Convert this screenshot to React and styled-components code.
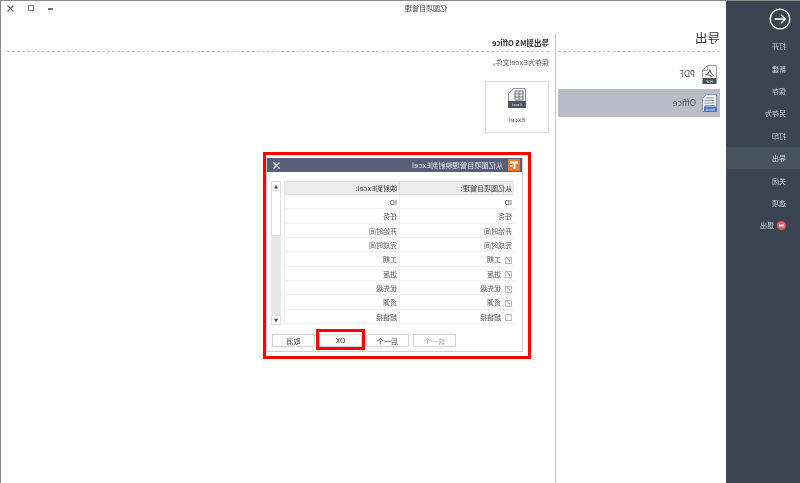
import React from "react";
import styled, { createGlobalStyle } from "styled-components";

// the whole screen in the reference is a mirror image, so it is laid out
// normally here and flipped once on Root
const GlobalStyle = createGlobalStyle`
  html, body {
    margin: 0;
    padding: 0;
    background: #fff;
    overflow: hidden;
  }
  * {
    box-sizing: border-box;
  }
`;

const fontStack = `"DejaVu Sans", "Noto Sans CJK SC", sans-serif`;

const menuItems = ["打开", "新建", "保存", "另存为", "打印", "导出", "关闭", "选项"];
const fields = [
  { name: "ID" },
  { name: "任务" },
  { name: "开始时间" },
  { name: "完成时间" },
  { name: "工期", check: true },
  { name: "进度", check: true },
  { name: "优先级", check: true },
  { name: "资源", check: true },
  { name: "超链接", check: false },
];

const BackIcon = () => (
  <svg width="22" height="22" viewBox="0 0 22 22" fill="none" stroke="#fff">
    <circle cx="11" cy="11" r="9.8" strokeWidth="1.3" />
    <path d="M16.5 11H6M10 6.8 5.8 11l4.2 4.2" strokeWidth="1.5" />
  </svg>
);

const ExitIcon = () => (
  <svg width="9" height="9" viewBox="0 0 9 9">
    <circle cx="4.5" cy="4.5" r="4.5" fill="#ee5a63" />
    <rect x="1.8" y="3.6" width="5.4" height="1.8" fill="#fff" />
  </svg>
);

const PdfIcon = () => (
  <svg width="16" height="19" viewBox="0 0 16 19" fill="none">
    <path d="M.5.5h9l5 5v13H.5z" fill="#fff" stroke="#9a9ca3" />
    <path d="M9.500.5v5h5" stroke="#9a9ca3" />
    <path d="M3 10.500c2-.6 3.500-3 4-6 .5 3 2 4.500 4.500 5-2.500 0-5 .6-6.500 2.500" stroke="#555a66" strokeWidth="1.1" />
    <rect x="1" y="13" width="13" height="6" fill="#4a4f5e" />
    <IconLabel x="7.500" y="17.800">PDF</IconLabel>
  </svg>
);

const WordIcon = () => (
  <svg width="15" height="18" viewBox="0 0 15 18" fill="none">
    <path d="M.5.5h10l4 4v13H.5z" fill="#eef0f4" stroke="#8f94a3" />
    <path d="M2.500 4h8M2.500 6.500h10M2.500 9h10M2.500 11.500h10" stroke="#8f94a3" />
    <rect x="0" y="12.500" width="13" height="5.500" fill="#4a78b8" />
    <IconLabel x="6.500" y="17">Word</IconLabel>
  </svg>
);

const ExcelIcon = () => (
  <svg width="18" height="20" viewBox="0 0 18 20" fill="none">
    <path d="M.5.5h12l5 5v14H.5z" fill="#f4f4f6" stroke="#8f93a0" />
    <path d="M3 3h8v9H3zM3 6h8M3 9h8M7 3v9" stroke="#6d7180" />
    <rect x="0" y="13" width="18" height="7" fill="#4c5060" />
    <IconLabel x="9" y="18">Excel</IconLabel>
  </svg>
);

const LogoIcon = () => (
  <svg width="12" height="12" viewBox="0 0 12 12">
    <rect width="12" height="12" fill="#ec7a2c" />
    <path d="M2 2.500h8v2H6.500V10H4.500V4.500H2zM7.500 6H10v1.500H7.500z" fill="#fff" />
  </svg>
);

const App = () => {
  return (
    <>
      <GlobalStyle />
      <Root>
        <Sidebar>
          <BackButton>
            <BackIcon />
          </BackButton>
          {menuItems.map((item) => (
            <MenuItem key={item} $active={item === "导出"}>
              {item}
            </MenuItem>
          ))}
          <MenuItem>
            <ExitIcon />
            退出
          </MenuItem>
        </Sidebar>
        <Content>
          <TitleBar>
            <WindowTitle>亿图项目管理</WindowTitle>
            <WindowControls>
              <MinimizeGlyph />
              <MaximizeGlyph />
              <CloseGlyph>
                <svg width="7" height="7" viewBox="0 0 7 7" stroke="#666" strokeWidth="1.2">
                  <path d="M.5.5l6 6M6.500.5l-6 6" />
                </svg>
              </CloseGlyph>
            </WindowControls>
          </TitleBar>
          <Body>
            <Panel>
              <PanelHeading>导出</PanelHeading>
              <FormatList>
                <FormatRow>
                  <PdfIcon />
                  PDF
                </FormatRow>
                <FormatRow $selected>
                  <WordIcon />
                  Office
                </FormatRow>
              </FormatList>
            </Panel>
            <Detail>
              <DetailHeading>导出到MS Office</DetailHeading>
              <DetailNote>保存为Excel文件。</DetailNote>
              <ExportCard>
                <ExcelIcon />
                <span>Excel</span>
              </ExportCard>
            </Detail>
          </Body>
        </Content>
        <MarkFrame>
          <Dialog>
            <DialogTitle>
              <LogoIcon />
              <DialogTitleText>从亿图项目管理映射到Excel</DialogTitleText>
              <svg width="7" height="7" viewBox="0 0 7 7" stroke="#fff" strokeWidth="1.1">
                <path d="M.5.5l6 6M6.500.5l-6 6" />
              </svg>
            </DialogTitle>
            <DialogBody>
              <MapTable>
                <HeadCell>从亿图项目管理：</HeadCell>
                <HeadCell>映射到Excel:</HeadCell>
                {fields.map((field) => (
                  <React.Fragment key={field.name}>
                    <Cell>
                      {field.check !== undefined && <CheckBox $checked={field.check} />}
                      {field.name}
                    </Cell>
                    <Cell>{field.name}</Cell>
                  </React.Fragment>
                ))}
              </MapTable>
              <ScrollBar>
                <ScrollButton>▲</ScrollButton>
                <ScrollThumb />
                <ScrollButton>▼</ScrollButton>
              </ScrollBar>
            </DialogBody>
            <DialogButtons>
              <DialogButton $disabled>前一个</DialogButton>
              <DialogButton>后一个</DialogButton>
              <DialogButton $marked>OK</DialogButton>
              <DialogButton>取消</DialogButton>
            </DialogButtons>
          </Dialog>
        </MarkFrame>
      </Root>
    </>
  );
};

const IconLabel = styled.text`
  font-size: 3.500px;
  font-family: ${fontStack};
  fill: #e8eaf0;
  text-anchor: middle;
`;
const Root = styled.div`
  position: relative;
  display: flex;
  width: 800px;
  height: 483px;
  overflow: hidden;
  transform: scaleX(-1);
  filter: blur(0.3px);
  border-top: 1px solid #8a8a8a;
  background: #fff;
  color: #444;
  font-family: ${fontStack};
  font-size: 8px;
`;
const Sidebar = styled.div`
  width: 74px;
  flex: none;
  background: #3b4451;
  display: flex;
  flex-direction: column;
  color: #d5d9de;
`;
const BackButton = styled.div`
  height: 34px;
  padding: 7px 0 0 9px;
`;
const MenuItem = styled.div`
  height: 22.4px;
  padding-left: 14px;
  display: flex;
  align-items: center;
  gap: 3px;
  font-size: 7px;
  background: ${(p) => (p.$active ? "#46525d" : "transparent")};
`;
const Content = styled.div`
  flex: 1;
  display: flex;
  flex-direction: column;
  border-right: 1px solid #8a8a8a;
`;
const TitleBar = styled.div`
  height: 32px;
  flex: none;
  display: flex;
  align-items: flex-start;
  padding: 3px 6px 0 279px;
`;
const WindowTitle = styled.div`
  font-size: 7px;
  line-height: 10px;
  color: #444;
`;
const WindowControls = styled.div`
  margin-left: auto;
  display: flex;
  align-items: center;
  gap: 14px;
  height: 8px;
`;
const MinimizeGlyph = styled.div`
  width: 5px;
  height: 2px;
  margin-top: 2px;
  background: #777;
`;
const MaximizeGlyph = styled.div`
  width: 6px;
  height: 6px;
  border: 1px solid #777;
`;
const CloseGlyph = styled.div`
  display: flex;
  width: 7px;
`;
const Body = styled.div`
  flex: 1;
  display: flex;
`;
const Panel = styled.div`
  width: 171px;
  flex: none;
  border-right: 1px solid #c8c8c8;
  padding: 0 2px 0 6px;
`;
const PanelHeading = styled.div`
  height: 19px;
  font-size: 12.500px;
  line-height: 12px;
  color: #333;
  border-bottom: 1px dashed #c4c4c4;
`;
const FormatList = styled.div`
  padding-top: 12px;
  display: flex;
  flex-direction: column;
  gap: 4px;
`;
const FormatRow = styled.div`
  height: ${(p) => (p.$selected ? 28 : 21)}px;
  padding-left: 3px;
  display: flex;
  align-items: center;
  gap: 6px;
  color: #555;
  background: ${(p) => (p.$selected ? "#babdc9" : "transparent")};
`;
const Detail = styled.div`
  flex: 1;
  padding: 0 6px 0 6px;
`;
const DetailHeading = styled.div`
  height: 19px;
  padding-top: 5px;
  font-family: "Noto Sans CJK SC", sans-serif;
  font-size: 7.500px;
  line-height: 10px;
  font-weight: bold;
  color: #333;
  border-bottom: 1px dashed #c4c4c4;
`;
const DetailNote = styled.div`
  margin-top: 6px;
  font-size: 7px;
  line-height: 10px;
  color: #555;
`;
const ExportCard = styled.div`
  margin-top: 13px;
  width: 64px;
  height: 52px;
  border: 1px solid #ddd;
  display: flex;
  flex-direction: column;
  align-items: center;
  padding-top: 6px;
  gap: 7px;
  font-size: 6px;
  line-height: 9px;
  color: #555;
`;
const MarkFrame = styled.div`
  position: absolute;
  left: 269px;
  top: 151px;
  width: 268px;
  height: 207px;
  border: 3px solid #f00;
  padding: 3px 0 4px 5px;
  background: #fff;
`;
const Dialog = styled.div`
  height: 100%;
  display: flex;
  flex-direction: column;
  border: 1px solid #cfcfcf;
  border-top: 0;
  background: #fff;
`;
const DialogTitle = styled.div`
  height: 14px;
  flex: none;
  display: flex;
  align-items: center;
  padding: 0 6px 0 2px;
  background: #565f77;
  color: #e8e9ee;
  font-size: 7.200px;
`;
const DialogTitleText = styled.div`
  flex: 1;
  padding-left: 5px;
`;
const DialogBody = styled.div`
  display: flex;
  gap: 3px;
  padding: 9px 4px 0 8px;
`;
const MapTable = styled.div`
  width: 230px;
  height: 144px;
  display: grid;
  grid-template-columns: 115px 115px;
  grid-template-rows: 14px repeat(9, 14.330px);
  font-size: 7px;
  line-height: 10px;
  color: #555;
`;
const HeadCell = styled.div`
  display: flex;
  align-items: center;
  padding: 1px 0 0 2px;
  background: #ececec;
  border: 1px solid #ddd;
  border-width: 1px 1px 1px 0;
  color: #333;
`;
const Cell = styled.div`
  display: flex;
  align-items: center;
  gap: 4px;
  padding: 3px 0 0 2px;
  border-right: 1px solid #eee;
  border-bottom: 1px solid #eee;
`;
const CheckBox = styled.span`
  width: 7px;
  height: 7px;
  border: 1px solid #bbb;
  position: relative;
  &::after {
    content: "${(p) => (p.$checked ? "✓" : "")}";
    position: absolute;
    left: 0;
    top: -2px;
    font-size: 6px;
    line-height: 8px;
    color: #666;
  }
`;
const ScrollBar = styled.div`
  width: 10px;
  height: 144px;
  display: flex;
  flex-direction: column;
  background: #e6e6e6;
`;
const ScrollButton = styled.div`
  height: 10px;
  background: #fff;
  border: 1px solid #ddd;
  font-size: 5px;
  line-height: 8px;
  text-align: center;
  color: #444;
  &:last-child {
    margin-top: auto;
  }
`;
const ScrollThumb = styled.div`
  height: 45px;
  background: #fff;
  border: 1px solid #ddd;
  border-top: 0;
`;
const DialogButtons = styled.div`
  display: flex;
  justify-content: flex-end;
  gap: 4px;
  padding: 9px 5px 0 0;
`;
const DialogButton = styled.div`
  position: relative;
  width: 43px;
  height: 13px;
  border: 1px solid #d4d4d4;
  display: flex;
  align-items: center;
  justify-content: center;
  font-size: 7px;
  color: ${(p) => (p.$disabled ? "#aaa" : "#444")};
  &::after {
    content: "";
    display: ${(p) => (p.$marked ? "block" : "none")};
    position: absolute;
    left: -4px;
    right: -4px;
    top: -6px;
    bottom: -4px;
    border: 3px solid #f00;
  }
`;

export default App;
